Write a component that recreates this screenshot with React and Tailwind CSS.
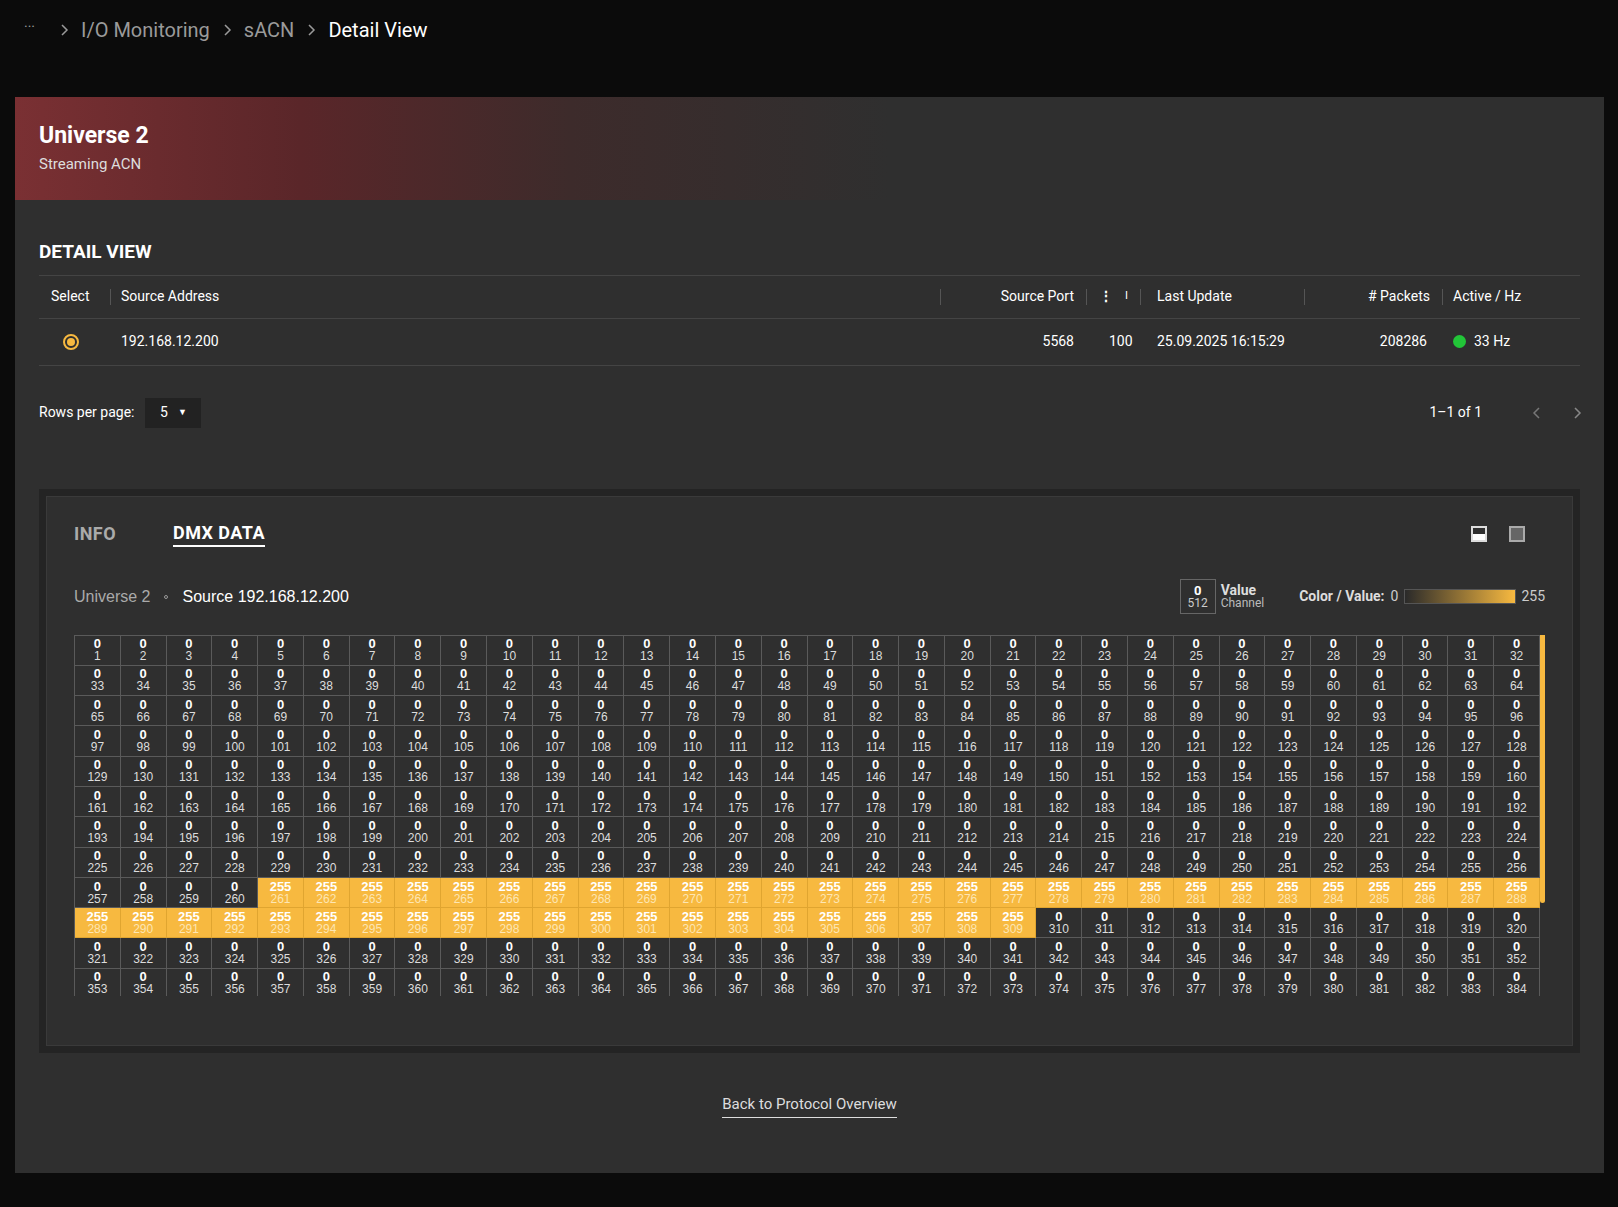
import React from "react";

const Chev = ({ dir = "r", cls = "" }) => (
  <svg width="10" height="14" viewBox="0 0 10 14" className={cls}>
    <path d={dir === "r" ? "M3 2 L8 7 L3 12" : "M7 2 L2 7 L7 12"} fill="none" stroke="currentColor" strokeWidth="1.5" />
  </svg>
);

const Div = () => <span className="inline-block w-px h-[16px] bg-[#555]" />;

export default function App() {
  const rows = [];
  for (let r = 0; r < 12; r++) {
    for (let c = 0; c < 32; c++) {
      const ch = r * 32 + c + 1;
      const on = ch >= 261 && ch <= 309;
      rows.push(
        <div key={ch} className={`h-[30.3px] flex flex-col items-center justify-center leading-[12px] border-r border-b ${on ? "bg-[#f7b940] border-[#e0a530]" : "border-[#5a5a5a]"}`}>
          <span className="text-[13px] font-bold text-white">{on ? 255 : 0}</span>
          <span className={`text-[12px] ${on ? "text-[#fde6b3]" : "text-[#ddd]"}`}>{ch}</span>
        </div>
      );
    }
  }
  const cols = "grid-cols-[72px_838px_140px_58px_166px_130px_1fr]";
  return (
    <div className="w-[1618px] h-[1207px] bg-[#0b0b0b] overflow-hidden" style={{ fontFamily: "Roboto, 'Liberation Sans', sans-serif" }}>
      <div className="h-[97px] flex items-start pt-[15px] pl-[24px] gap-[12px] text-[20px] text-[#9a9a9a]">
        <span className="text-[14px] mt-[2px]">···</span>
        <Chev cls="mt-[8px] ml-[12px]" />
        <span>I/O Monitoring</span>
        <Chev cls="mt-[8px]" />
        <span>sACN</span>
        <Chev cls="mt-[8px]" />
        <span className="text-white">Detail View</span>
      </div>
      <div className="mx-[15px] w-[1589px] h-[1076px] bg-[#2f2f2f] flex flex-col">
        <div className="h-[103px] px-[24px] flex flex-col justify-center bg-[linear-gradient(90deg,#7a3033_0%,#5a2629_18%,#3d2b2b_35%,#2f2f2f_55%)]">
          <div className="text-[23px] font-bold text-white leading-tight">Universe 2</div>
          <div className="text-[15px] text-[#ddd] mt-[2px]">Streaming ACN</div>
        </div>
        <div className="px-[24px]">
          <div className="text-[19px] font-bold text-white mt-[38px] mb-[8px]">DETAIL VIEW</div>
          <div className={`border-t border-[#444] h-[43px] grid ${cols} items-center text-[14px] text-white`}>
            <div className="pl-[12px] flex justify-between items-center"><span>Select</span><Div /></div>
            <div className="pl-[10px] flex justify-between items-center pr-[8px]"><span>Source Address</span><Div /></div>
            <div className="flex justify-end items-center gap-[12px] pr-[2px]"><span>Source Port</span><Div /></div>
            <div className="flex items-center gap-[12px] pl-[10px]"><span className="font-bold">⋮</span><span className="text-[11px]">I</span><Div /></div>
            <div className="flex justify-between items-center pl-[10px] pr-[8px]"><span>Last Update</span><Div /></div>
            <div className="flex justify-end items-center gap-[12px]"><span># Packets</span><Div /></div>
            <div className="pl-[10px]">Active / Hz</div>
          </div>
          <div className={`border-t border-b border-[#444] h-[48px] grid ${cols} items-center text-[14px] text-white`}>
            <div className="pl-[24px]"><div className="w-[16px] h-[16px] rounded-full border-2 border-[#f7b940] flex items-center justify-center"><div className="w-[8px] h-[8px] rounded-full bg-[#f7b940]" /></div></div>
            <div className="pl-[10px]">192.168.12.200</div>
            <div className="text-right pr-[15px]">5568</div>
            <div className="pl-[20px]">100</div>
            <div className="pl-[10px]">25.09.2025 16:15:29</div>
            <div className="text-right pr-[16px]">208286</div>
            <div className="pl-[10px] flex items-center gap-[8px]"><span className="w-[13px] h-[13px] rounded-full bg-[#22c538]" />33 Hz</div>
          </div>
          <div className="flex items-center h-[30px] mt-[32px] text-[14px] text-white">
            <span>Rows per page:</span>
            <div className="ml-[11px] w-[56px] h-[30px] bg-[#222] flex items-center justify-center gap-[10px]">5 <span className="text-[9px]">▼</span></div>
            <span className="ml-auto mr-[50px]">1–1 of 1</span>
            <Chev dir="l" cls="text-[#777] mr-[30px]" />
            <Chev cls="text-[#888] mr-[-2px]" />
          </div>
        </div>
        <div className="mx-[24px] mt-[61px] bg-[#242424] p-[7px] h-[564px]">
          <div className="bg-[#2f2f2f] border border-[#3a3a3a] h-full px-[27px]">
            <div className="flex items-center mt-[22px] h-[30px]">
              <span className="text-[18px] font-bold text-[#aaa] tracking-wide">INFO</span>
              <span className="ml-[57px] text-[18px] font-bold text-white tracking-wide border-b-2 border-white leading-[24px]">DMX DATA</span>
              <div className="ml-auto mr-[20px] flex gap-[22px]">
                <div className="w-[16px] h-[16px] border-2 border-[#ddd] flex flex-col justify-end"><div className="h-[6px] bg-white" /></div>
                <div className="w-[16px] h-[16px] border-2 border-[#aaa] bg-[#666]" />
              </div>
            </div>
            <div className="flex items-center mt-[30px] h-[36px]">
              <span className="text-[16px] text-[#aaa]" style={{ fontFamily: "'Liberation Sans', sans-serif" }}>Universe 2</span>
              <span className="mx-[14px] w-[4px] h-[4px] rounded-full border border-[#999]" />
              <span className="text-[16px] text-white" style={{ fontFamily: "'Liberation Sans', sans-serif" }}>Source 192.168.12.200</span>
              <div className="ml-auto flex items-center">
                <div className="w-[36px] h-[35px] border border-[#666] flex flex-col items-center justify-center leading-[13px]">
                  <span className="text-[13px] font-bold text-white">0</span>
                  <span className="text-[12px] text-[#ccc]">512</span>
                </div>
                <div className="ml-[5px] flex flex-col leading-[13px]">
                  <span className="text-[14px] font-bold text-[#ddd]">Value</span>
                  <span className="text-[12px] text-[#bbb]">Channel</span>
                </div>
                <span className="ml-[35px] text-[14px] font-bold text-[#ddd]">Color / Value:</span>
                <span className="ml-[6px] text-[14px] text-[#ccc]">0</span>
                <div className="ml-[6px] w-[112px] h-[15px] border border-[#555] bg-[linear-gradient(90deg,#2a2a2a,#f7b940)]" />
                <span className="ml-[5px] text-[14px] text-[#ccc]">255</span>
              </div>
            </div>
            <div className="mt-[20px] flex">
              <div className="w-[1466px] h-[361px] overflow-hidden border-l border-t border-[#5a5a5a]" style={{ fontFamily: "'Liberation Sans', sans-serif" }}>
                <div className="grid grid-cols-[repeat(32,1fr)]">{rows}</div>
              </div>
              <div className="w-[5px] h-[268px] bg-[#f7b940] rounded-b-sm" />
            </div>
          </div>
        </div>
        <div className="flex justify-center mt-[40px]">
          <span className="text-[15px] text-[#ddd] border-b border-[#ddd] pb-[2px]">Back to Protocol Overview</span>
        </div>
      </div>
    </div>
  );
}
